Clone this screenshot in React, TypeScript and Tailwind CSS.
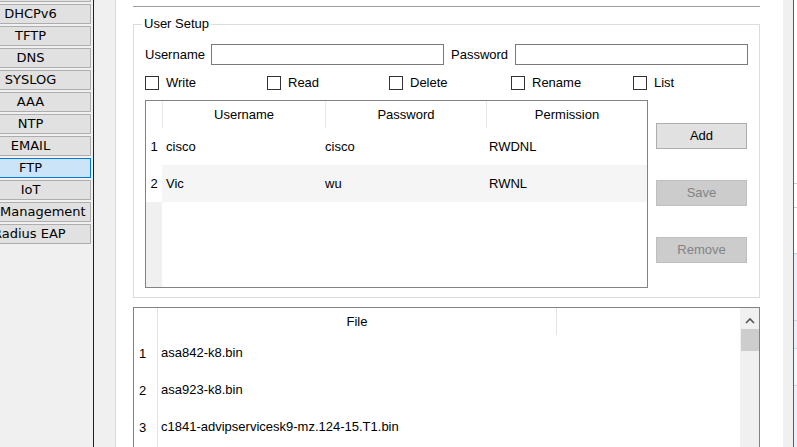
import React from "react";

const services = [
  "",
  "DHCPv6",
  "TFTP",
  "DNS",
  "SYSLOG",
  "AAA",
  "NTP",
  "EMAIL",
  "FTP",
  "IoT",
  "Management",
  "Radius EAP",
];

const users = [
  { user: "cisco", pass: "cisco", perm: "RWDNL" },
  { user: "Vic", pass: "wu", perm: "RWNL" },
];

const files = [
  "asa842-k8.bin",
  "asa923-k8.bin",
  "c1841-advipservicesk9-mz.124-15.T1.bin",
];

const perms = ["Write", "Read", "Delete", "Rename", "List"];

const Sidebar = () => (
  <div className="w-[94px] shrink-0 h-full bg-[#f0f0f0] border-r border-[#1e1e1e] overflow-hidden font-['DejaVu_Sans',Verdana,sans-serif] text-[13px] text-black">
    <div className="-ml-[30px] -mt-[18px] flex flex-col gap-[2px] w-[121px]">
      {services.map((s, i) => {
        const selected = s === "FTP";
        return (
          <div
            key={i}
            className={
              selected
                ? "h-[20px] flex items-center justify-center border border-[#0078d7] bg-[#cce4f7] whitespace-nowrap"
                : s === "Management"
                ? "h-[20px] flex items-center justify-start pl-[29px] border border-[#adadad] bg-[#e1e1e1] whitespace-nowrap"
                : s === "Radius EAP"
                ? "h-[20px] flex items-center justify-start pl-[22px] border border-[#adadad] bg-[#e1e1e1] whitespace-nowrap"
                : "h-[20px] flex items-center justify-center border border-[#adadad] bg-[#e1e1e1] whitespace-nowrap"
            }
          >
            {s}
          </div>
        );
      })}
    </div>
  </div>
);

const Checkbox = ({ label }: { label: string }) => (
  <div className="w-[122px] flex items-center">
    <div className="w-[14px] h-[14px] border border-[#333333] bg-white" />
    <span className="ml-[7px]">{label}</span>
  </div>
);

const UserTable = () => (
  <div className="w-[503px] h-[188px] border border-[#828282] bg-white flex flex-col">
    <div className="h-[27px] flex shrink-0">
      <div className="w-[16px]" />
      <div className="w-[163px] flex items-center justify-center border-l border-[#e8e8e8]">
        Username
      </div>
      <div className="w-[161px] flex items-center justify-center border-l border-[#e8e8e8]">
        Password
      </div>
      <div className="w-[161px] flex items-center justify-center border-l border-[#e8e8e8]">
        Permission
      </div>
    </div>
    {users.map((u, i) => (
      <div key={u.user} className="h-[37px] flex shrink-0">
        <div className="w-[16px] flex items-center justify-center">{i + 1}</div>
        <div
          className={
            i % 2 === 1
              ? "flex-1 flex items-center bg-[#f5f5f5]"
              : "flex-1 flex items-center"
          }
        >
          <div className="w-[162px] pl-[4px]">{u.user}</div>
          <div className="w-[162px] pl-[1px]">{u.pass}</div>
          <div className="w-[159px] pl-[3px]">{u.perm}</div>
        </div>
      </div>
    ))}
    <div className="flex-1 flex">
      <div className="w-[16px] bg-[#f0f0f0]" />
      <div className="flex-1" />
    </div>
  </div>
);

const ActionButton = ({ label, disabled }: { label: string; disabled?: boolean }) => (
  <div
    className={
      disabled
        ? "w-[91px] h-[26px] flex items-center justify-center border border-[#bfbfbf] bg-[#cccccc] text-[#838383]"
        : "w-[91px] h-[26px] flex items-center justify-center border border-[#adadad] bg-[#e1e1e1] text-black"
    }
  >
    {label}
  </div>
);

const UserSetup = () => (
  <div className="relative mt-[17px] h-[274px] border border-[#dcdcdc]">
    <span className="absolute -top-[9px] left-[8px] bg-white px-[2px] leading-[16px]">
      User Setup
    </span>
    <div className="flex items-center mt-[19px] pl-[11px] h-[21px]">
      <span className="w-[66px]">Username</span>
      <div className="w-[233px] h-[21px] border border-[#7a7a7a] bg-white" />
      <span className="w-[71px] pl-[7px]">Password</span>
      <div className="w-[233px] h-[21px] border border-[#7a7a7a] bg-white" />
    </div>
    <div className="flex items-center mt-[11px] pl-[11px] h-[14px]">
      {perms.map((p) => (
        <Checkbox key={p} label={p} />
      ))}
    </div>
    <div className="flex mt-[10px] pl-[11px]">
      <UserTable />
      <div className="ml-[8px] pt-[23px] flex flex-col gap-[31px]">
        <ActionButton label="Add" />
        <ActionButton label="Save" disabled />
        <ActionButton label="Remove" disabled />
      </div>
    </div>
  </div>
);

const FileTable = () => (
  <div className="relative mt-[9px] h-[160px] border border-[#828282] border-b-0 bg-white flex">
    <div className="w-[24px] flex flex-col border-r border-[#e3e3e3]">
      <div className="h-[27px]" />
      {files.map((f, i) => (
        <div key={f} className="h-[37px] flex items-center pl-[5px]">
          {i + 1}
        </div>
      ))}
    </div>
    <div className="flex-1 flex flex-col">
      <div className="h-[27px] flex shrink-0">
        <div className="w-[399px] flex items-center justify-center border-r border-[#e3e3e3]">
          File
        </div>
      </div>
      {files.map((f) => (
        <div key={f} className="h-[37px] flex items-center pl-[3px] pb-[2px]">
          {f}
        </div>
      ))}
    </div>
    <div className="w-[19px] bg-[#f0f0f0] flex flex-col items-center">
      <svg width="10" height="7" viewBox="0 0 10 7" className="mt-[9px]">
        <path d="M1 6 L5 2 L9 6" fill="none" stroke="#555555" strokeWidth="1.6" />
      </svg>
      <div className="mt-[5px] w-[18px] h-[22px] bg-[#cdcdcd]" />
    </div>
  </div>
);

const RightStrip = () => (
  <div className="flex h-full shrink-0">
    <div className="w-[23px] bg-white" />
    <div className="w-[10px] bg-[#f0f0f0]" />
    <div className="w-[1px] bg-[#5a5a5a]" />
    <div className="w-[3px] flex flex-col">
      <div className="h-[183px] bg-white" />
      <div className="h-[24px] border-t border-[#d0d0d0] bg-white" />
      <div className="h-[46px] border-t border-[#d0d0d0] bg-white" />
      <div className="h-[67px] border-t border-[#c8d4e3] bg-[#e8f0fa]" />
      <div className="h-[28px] border-t border-[#c8d4e3] bg-[#e8f0fa]" />
      <div className="h-[37px] border-t border-[#c8d4e3] bg-[#f4f8fc]" />
      <div className="flex-1 border-t border-[#c8d4e3] bg-[#e8f0fa]" />
    </div>
  </div>
);

export default function App() {
  return (
    <div className="w-[797px] h-[447px] overflow-hidden flex bg-white">
      <Sidebar />
      <div className="w-[22px] shrink-0 h-full bg-[#f0f0f0] border-r border-[#d9d9d9]" />
      <div className="flex-1 pl-[17px] font-['Liberation_Sans',Arial,sans-serif] text-[13px] text-black">
        <div className="w-[627px]">
          <div className="h-[6px]" />
          <div className="h-[1px] bg-[#a0a0a0]" />
          <UserSetup />
          <FileTable />
        </div>
      </div>
      <RightStrip />
    </div>
  );
}
